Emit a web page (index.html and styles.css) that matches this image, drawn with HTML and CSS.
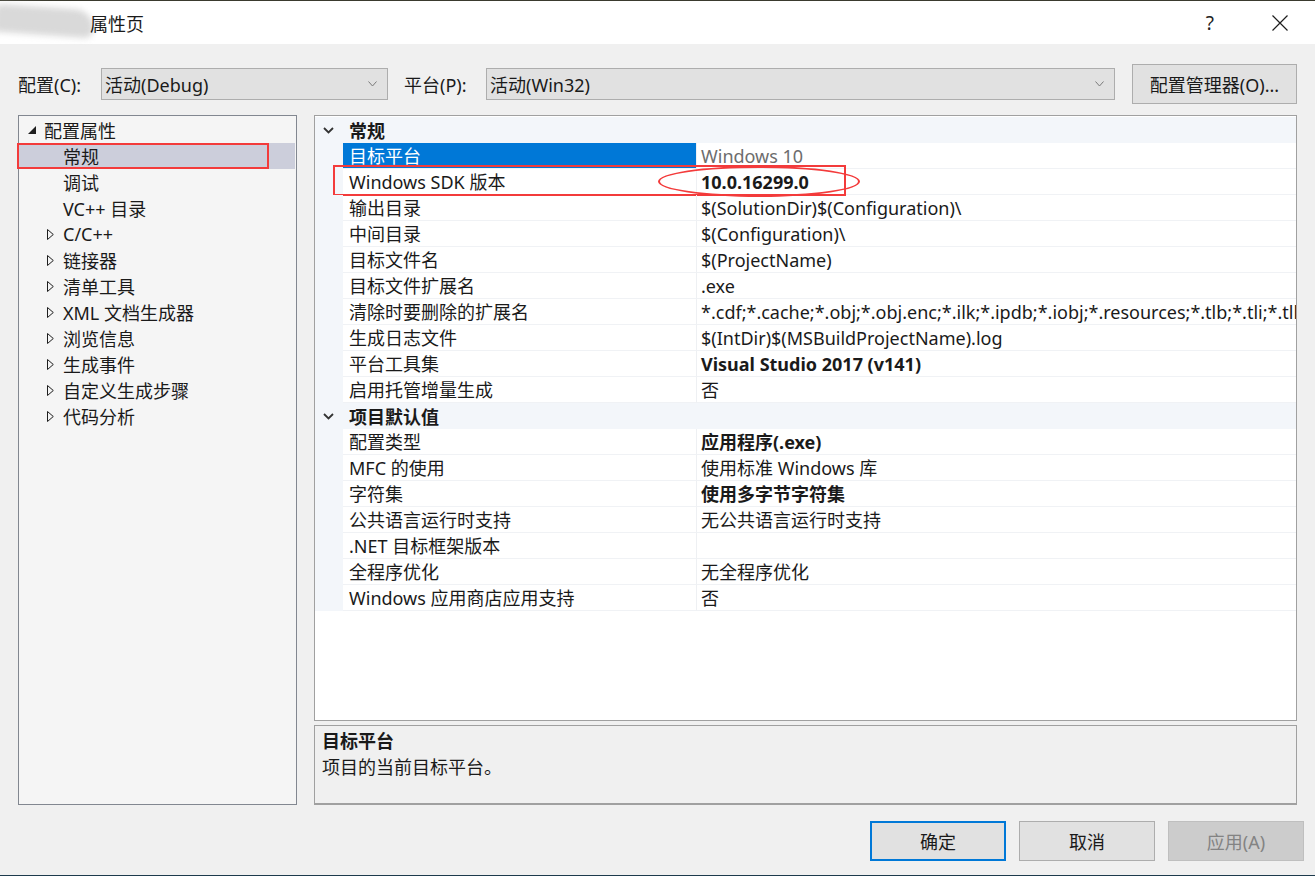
FILE: index.html
```html
<!DOCTYPE html>
<html lang="zh-CN">
<head>
    <meta charset="UTF-8">
    <meta name="viewport" content="width=device-width, initial-scale=1.0">
    <title>属性页</title>
    <link rel="stylesheet" href="styles.css">
</head>
<body>
    <div class="window">
        <header class="titlebar">
            <span class="smudge"></span>
            <span class="title">属性页</span>
            <span class="help">?</span>
            <span class="close">
                <svg width="16" height="16" viewBox="0 0 16 16"><path d="M0.5 0.5 L15.5 15.5 M15.5 0.5 L0.5 15.5" stroke="#1e1e1e" stroke-width="1.2" fill="none"/></svg>
            </span>
        </header>

        <div class="toolbar">
            <span class="label label-config">配置(C):</span>
            <div class="combo combo-config">
                <span>活动(Debug)</span>
                <svg class="combo-arrow" width="9" height="6" viewBox="0 0 9 6"><path d="M0.5 0.5 L4.5 5 L8.5 0.5" stroke="#7a7a7a" fill="none"/></svg>
            </div>
            <span class="label label-platform">平台(P):</span>
            <div class="combo combo-platform">
                <span>活动(Win32)</span>
                <svg class="combo-arrow" width="9" height="6" viewBox="0 0 9 6"><path d="M0.5 0.5 L4.5 5 L8.5 0.5" stroke="#7a7a7a" fill="none"/></svg>
            </div>
            <button class="btn btn-manager">配置管理器(O)...</button>
        </div>

        <div class="main">
            <div class="tree">
                <div class="node level0">
                    <span class="twisty"><svg width="8" height="8" viewBox="0 0 8 8"><polygon points="8,0 8,8 0,8" fill="#1e1e1e"/></svg></span>
                    <span>配置属性</span>
                </div>
                <div class="node level1 selected">
                    <span class="twisty"></span>
                    <span>常规</span>
                    <span class="mark-rect"></span>
                </div>
                <div class="node level1"><span class="twisty"></span><span>调试</span></div>
                <div class="node level1"><span class="twisty"></span><span>VC++ 目录</span></div>
                <div class="node level1"><span class="twisty closed"></span><span>C/C++</span></div>
                <div class="node level1"><span class="twisty closed"></span><span>链接器</span></div>
                <div class="node level1"><span class="twisty closed"></span><span>清单工具</span></div>
                <div class="node level1"><span class="twisty closed"></span><span>XML 文档生成器</span></div>
                <div class="node level1"><span class="twisty closed"></span><span>浏览信息</span></div>
                <div class="node level1"><span class="twisty closed"></span><span>生成事件</span></div>
                <div class="node level1"><span class="twisty closed"></span><span>自定义生成步骤</span></div>
                <div class="node level1"><span class="twisty closed"></span><span>代码分析</span></div>
            </div>

            <div class="right">
                <div class="grid" id="grid"></div>
                <div class="desc">
                    <div class="desc-title">目标平台</div>
                    <div class="desc-text">项目的当前目标平台。</div>
                </div>
            </div>
        </div>

        <div class="footer">
            <button class="btn btn-dialog btn-default">确定</button>
            <button class="btn btn-dialog">取消</button>
            <button class="btn btn-dialog btn-disabled">应用(A)</button>
        </div>
    </div>

    <script>
        const sections = [
            {
                name: '常规',
                rows: [
                    { name: '目标平台', value: 'Windows 10', cls: 'selected', valueCls: 'dim' },
                    { name: 'Windows SDK 版本', value: '10.0.16299.0', valueCls: 'bold', marked: true },
                    { name: '输出目录', value: '$(SolutionDir)$(Configuration)\\' },
                    { name: '中间目录', value: '$(Configuration)\\' },
                    { name: '目标文件名', value: '$(ProjectName)' },
                    { name: '目标文件扩展名', value: '.exe' },
                    { name: '清除时要删除的扩展名', value: '*.cdf;*.cache;*.obj;*.obj.enc;*.ilk;*.ipdb;*.iobj;*.resources;*.tlb;*.tli;*.tlh;*.tmp;*.rsp;*.pgc;*.pgd;*.meta' },
                    { name: '生成日志文件', value: '$(IntDir)$(MSBuildProjectName).log' },
                    { name: '平台工具集', value: 'Visual Studio 2017 (v141)', valueCls: 'bold' },
                    { name: '启用托管增量生成', value: '否' }
                ]
            },
            {
                name: '项目默认值',
                rows: [
                    { name: '配置类型', value: '应用程序(.exe)', valueCls: 'bold' },
                    { name: 'MFC 的使用', value: '使用标准 Windows 库' },
                    { name: '字符集', value: '使用多字节字符集', valueCls: 'bold' },
                    { name: '公共语言运行时支持', value: '无公共语言运行时支持' },
                    { name: '.NET 目标框架版本', value: '' },
                    { name: '全程序优化', value: '无全程序优化' },
                    { name: 'Windows 应用商店应用支持', value: '否' }
                ]
            }
        ];

        const chevron = '<svg width="11" height="7" viewBox="0 0 11 7"><path d="M1 1 L5.5 5.5 L10 1" stroke="#333" stroke-width="1.8" fill="none"/></svg>';

        function renderGrid() {
            const grid = document.getElementById('grid');
            let html = '';
            sections.forEach(section => {
                html += `<div class="category"><span class="gutter">${chevron}</span><span class="cat-name">${section.name}</span></div>`;
                section.rows.forEach(row => {
                    html += `
                        <div class="prop ${row.cls || ''}">
                            <span class="gutter"></span>
                            <span class="prop-name">${row.name}</span>
                            <span class="prop-value ${row.valueCls || ''}">${row.value}</span>
                            ${row.marked ? '<span class="mark-box"></span><span class="mark-ellipse"></span>' : ''}
                        </div>`;
                });
            });
            grid.innerHTML = html;
        }

        renderGrid();
    </script>
</body>
</html>
```

FILE: styles.css
```css
* {
    box-sizing: border-box;
}
body {
    margin: 0;
    padding: 0;
    overflow: hidden;
    font-family: "Segoe UI", "Noto Sans", "Noto Sans CJK SC", sans-serif;
    font-size: 18px;
    color: #1a1a1a;
    background-color: #f0f0f0;
}
.window {
    width: 1315px;
    height: 876px;
    background-color: #f0f0f0;
    border-top: 1px solid #3a3a2e;
    border-bottom: 1px solid #1d3a4c;
    display: flex;
    flex-direction: column;
}

/* title bar */
.titlebar {
    height: 43px;
    background-color: #fff;
    display: flex;
    align-items: center;
    position: relative;
    flex-shrink: 0;
}
.smudge {
    position: absolute;
    left: -6px;
    top: 6px;
    width: 100px;
    height: 28px;
    background: #d9d9d9;
    border-radius: 14px 40px 18px 8px;
    filter: blur(3px);
    transform: rotate(4deg);
}
.title {
    margin-left: 90px;
    font-size: 18px;
    position: relative;
}
.help {
    margin-left: auto;
    margin-right: 58px;
    font-size: 19px;
    color: #222;
}
.close {
    margin-right: 27px;
    display: flex;
}

/* configuration toolbar */
.toolbar {
    display: flex;
    align-items: center;
    height: 40px;
    margin-top: 20px;
    margin-bottom: 11px;
    padding-left: 18px;
    flex-shrink: 0;
}
.label {
    white-space: nowrap;
}
.label-config {
    width: 83px;
}
.label-platform {
    width: 82px;
    margin-left: 16px;
}
.combo {
    height: 32px;
    background-color: #e1e1e1;
    border: 1px solid #adadad;
    display: flex;
    align-items: center;
    padding-left: 3px;
    padding-right: 10px;
}
.combo span {
    flex: 1;
}
.combo-config {
    width: 287px;
}
.combo-platform {
    width: 629px;
}
.btn {
    font-family: inherit;
    font-size: 18px;
    color: #1a1a1a;
    background-color: #e1e1e1;
    border: 1px solid #adadad;
    padding: 0;
    cursor: pointer;
}
.btn-manager {
    width: 165px;
    height: 40px;
    margin-left: 17px;
}

/* main area */
.main {
    display: flex;
    height: 690px;
    padding-left: 18px;
    flex-shrink: 0;
}
.tree {
    width: 279px;
    height: 690px;
    border: 1px solid #828790;
    background-color: #f5f5f5;
    padding-top: 1px;
}
.node {
    height: 26px;
    display: flex;
    align-items: center;
    white-space: nowrap;
    position: relative;
    margin-right: 1px;
}
.node.level0 {
    padding-left: 9px;
}
.node.level1 {
    padding-left: 28px;
}
.node.selected {
    background-color: #cccedb;
}
.twisty {
    width: 16px;
    height: 26px;
    display: flex;
    align-items: center;
    flex-shrink: 0;
}
.twisty.closed::before {
    content: "";
    width: 7px;
    height: 11px;
    background: url("data:image/svg+xml;utf8,<svg xmlns='http://www.w3.org/2000/svg' width='7' height='11' viewBox='0 0 7 11'><polygon points='0.5,0.5 6.3,5.5 0.5,10.5' fill='none' stroke='%231e1e1e'/></svg>") no-repeat;
}
.mark-rect {
    position: absolute;
    left: -2px;
    top: 0;
    width: 252px;
    height: 26px;
    border: 2px solid #f33b3b;
}

.right {
    width: 983px;
    margin-left: 17px;
    display: flex;
    flex-direction: column;
}
.grid {
    height: 607px;
    background-color: #fff;
    border: 1px solid #a0a0a0;
    padding-top: 1px;
    overflow: hidden;
}
.category,
.prop {
    height: 26px;
    display: flex;
    align-items: center;
    white-space: nowrap;
    position: relative;
}
.category {
    background-color: #f3f6fa;
    font-weight: bold;
}
.gutter {
    width: 28px;
    height: 26px;
    flex-shrink: 0;
    background-color: #f3f6fa;
    display: flex;
    align-items: center;
    padding-left: 8px;
}
.cat-name {
    padding-left: 6px;
}
.prop-name {
    width: 354px;
    height: 26px;
    line-height: 26px;
    padding-left: 6px;
    border-right: 1px solid #eef0f3;
    border-bottom: 1px solid #f0f2f5;
    flex-shrink: 0;
}
.prop.selected .prop-name {
    background-color: #0078d7;
    color: #fff;
}
.prop-value {
    flex: 1;
    height: 26px;
    line-height: 26px;
    padding-left: 4px;
    overflow: hidden;
    border-bottom: 1px solid #f0f2f5;
}
.prop-value.dim {
    color: #6d6d6d;
}
.prop-value.bold {
    font-weight: bold;
}
.mark-box {
    position: absolute;
    left: 18px;
    top: -4px;
    width: 513px;
    height: 31px;
    border: 2px solid #f33b3b;
}
.mark-ellipse {
    position: absolute;
    left: 343px;
    top: -3px;
    width: 202px;
    height: 31px;
    border: 2px solid #f33b3b;
    border-radius: 50%;
}

.desc {
    height: 80px;
    margin-top: 4px;
    border: 1px solid #a0a0a0;
    border-bottom: 2px solid #a0a0a0;
    background-color: #f0f0f0;
    padding: 2px 7px;
}
.desc-title {
    font-weight: bold;
    line-height: 26px;
}
.desc-text {
    line-height: 26px;
}

/* dialog buttons */
.footer {
    display: flex;
    justify-content: flex-end;
    gap: 13px;
    padding-top: 16px;
    padding-right: 11px;
}
.btn-dialog {
    width: 136px;
    height: 40px;
}
.btn-default {
    border: 2px solid #0078d7;
}
.btn-disabled {
    background-color: #cccccc;
    border-color: #bfbfbf;
    color: #838383;
    cursor: default;
}
```
